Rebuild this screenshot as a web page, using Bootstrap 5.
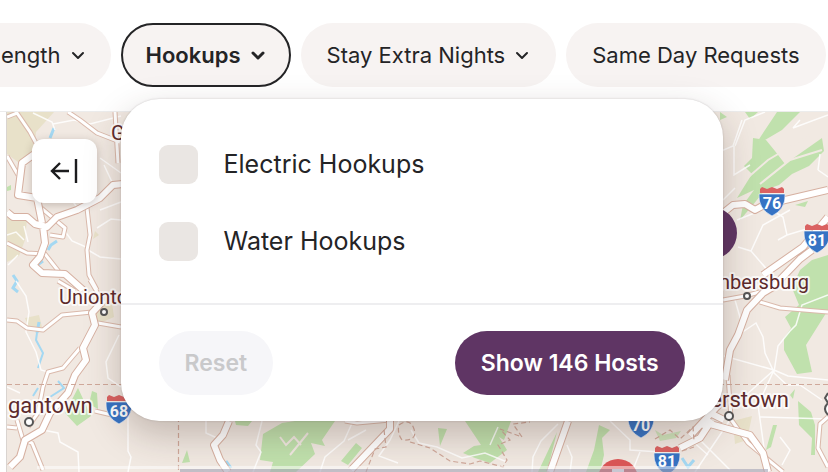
<!DOCTYPE html>
<html lang="en">
<head>
<meta charset="utf-8">
<meta name="viewport" content="width=device-width, initial-scale=1">
<title>Host map filters</title>
<link href="https://cdn.jsdelivr.net/npm/bootstrap@5.3.0/dist/css/bootstrap.min.css" rel="stylesheet">
<style>
  body { font-family: Inter, "Liberation Sans", sans-serif; color: #242426; background: #fff; }
  .filter-bar { padding: 23px 0 24px; border-bottom: 1px solid #ececec; gap: 10px; }
  .pill { height: 64px; padding: 0 26px; border: 0; border-radius: 32px; background: #f7f3f2; color: #242426; font-size: 22px; line-height: 28px; gap: 9px; white-space: nowrap; flex: none; }
  .pill.filter-first { padding-left: 1px; padding-right: 25px; border-radius: 0 32px 32px 0; }
  .pill.is-open { border: 2px solid #242426; padding: 0 23px; font-weight: 600; }
  .pill svg { width: 16px; height: 16px; }
  .filter-menu { top: calc(100% + 12px); left: 0; width: 602px; border-radius: 38px; background: #fff; box-shadow: 0 0 2px rgba(40,30,30,.22), 0 14px 36px rgba(60,40,30,.26); z-index: 5; }
  .menu-options { padding: 46px 38px 42px; gap: 38px; }
  .menu-options .option { gap: 26px; }
  .option label { font-size: 25px; line-height: 39px; }
  .option .form-check-input { width: 39px; height: 39px; margin: 0; border: 0; border-radius: 9px; background-color: #eae6e3; flex: none; }
  .menu-actions { padding: 26px 38px; border-top: 2px solid #eeeef0; }
  .menu-actions button { height: 64px; padding: 0 26px; border: 0; border-radius: 32px; font-size: 23px; line-height: 28px; font-weight: 600; }
  .btn-reset { background: #f6f6f9; color: #c9c9cb; }
  .btn-show { background: #5f3564; color: #fff; }
  .map-area { margin-left: 6px; border-left: 1px solid #d9d4d0; background: #f1e9e2; min-height: 0; }
  .collapse-btn { top: 27px; left: 25px; width: 65px; height: 64px; border: 0; border-radius: 12px; background: #fff; box-shadow: 0 2px 8px rgba(60,40,30,.25); }
  .place { font: 400 20px Roboto, sans-serif; fill: #5d2a2c; stroke: #fff; stroke-width: 4px; stroke-opacity: .8; paint-order: stroke; stroke-linejoin: round; }
  .place-lg { font-size: 22px; }
  .shield-no { font: 700 16px Roboto, sans-serif; fill: #fff; text-anchor: middle; }
</style>
<script src="https://cdn.jsdelivr.net/npm/bootstrap@5.3.0/dist/js/bootstrap.bundle.min.js"></script>
</head>
<body>
<div class="d-flex flex-column vh-100 overflow-hidden">
  <nav class="filter-bar d-flex flex-nowrap" aria-label="Filters">
    <button type="button" class="pill filter-first d-flex align-items-center">ength
      <svg viewBox="0 0 16 16" fill="none" stroke="currentColor" stroke-width="2" stroke-linecap="round" stroke-linejoin="round" aria-hidden="true"><path d="M3 6l5 5 5-5"/></svg></button>
    <div class="position-relative flex-shrink-0">
      <button type="button" class="pill is-open d-flex align-items-center" aria-expanded="true">Hookups
        <svg viewBox="0 0 16 16" fill="none" stroke="currentColor" stroke-width="3" stroke-linecap="round" stroke-linejoin="round" aria-hidden="true"><path d="M3 6l5 5 5-5"/></svg></button>
      <form class="filter-menu position-absolute">
        <div class="menu-options d-flex flex-column">
          <div class="option d-flex align-items-center"><input class="form-check-input" type="checkbox" id="electric"><label for="electric">Electric Hookups</label></div>
          <div class="option d-flex align-items-center"><input class="form-check-input" type="checkbox" id="water"><label for="water">Water Hookups</label></div>
        </div>
        <div class="menu-actions d-flex justify-content-between">
          <button type="reset" class="btn-reset" disabled>Reset</button>
          <button type="button" class="btn-show">Show 146 Hosts</button>
        </div>
      </form>
    </div>
    <button type="button" class="pill d-flex align-items-center">Stay Extra Nights
      <svg viewBox="0 0 16 16" fill="none" stroke="currentColor" stroke-width="2" stroke-linecap="round" stroke-linejoin="round" aria-hidden="true"><path d="M3 6l5 5 5-5"/></svg></button>
    <button type="button" class="pill d-flex align-items-center">Same Day Requests</button>
  </nav>

  <main class="map-area position-relative flex-grow-1 overflow-hidden">
    <svg class="d-block w-100 h-100" viewBox="7 112 821 360" preserveAspectRatio="xMinYMin slice" role="img" aria-label="Map of hosts">
      <defs>
        <g id="shield">
          <path d="M-13-7H13Q14 8 0 15Q-14 8-13-7Z" fill="#3673c4" stroke="#fff" stroke-opacity=".6" stroke-width="1"/>
          <path d="M-12-8V-12L-10-14-5-12 0-14 5-12 10-14 12-12V-8Z" fill="#da6262"/>
        </g>
        <!-- road network, drawn twice: casing and fill -->
        <g id="roads" fill="none" stroke-linejoin="round">
          <path d="M40 154L33 155 22 163 18 195 37 198 42 223M7 212L13 217H27L35 224 47 227 57 217 77 210 100 198 113 185 123 184M43 226L45 243 40 257 33 265 42 273 65 274 83 290M104 300L92 313 95 325 83 348 86 360 75 375 68 393 50 413 42 430 25 440 20 457 10 467M723 213L733 205 745 204 755 210 764 205 828 190M828 217L803 247 763 275M812 250L800 259 773 287 763 293 747 310 738 335 730 350 725 380M700 425L710 424 750 435 763 453 768 472M700 408L724 420M690 436L725 398M229 421L223 435 214 445 220 460 228 472M390 421V429L351 470M568 421L550 472M680 448L700 438 712 420"/>
        </g>
        <g id="lanes" fill="none" stroke-linejoin="round">
          <path d="M68 112L80 120 97 133 120 142M115 112L118 163M87 208L90 235 87 250 89 275 97 290M40 207L65 228 63 237 50 235M7 243L27 253 45 254 60 273M7 117L17 113 30 132 37 145M7 156L18 175M7 320L17 321 27 328 43 330 62 315 92 312M80 348L63 368 48 372 43 387 38 413 28 427M98 323L121 327M17 420L23 440 32 443 43 470M7 427L17 428M58 281L75 291M90 280L100 297M95 411L112 415M728 375L731 418M730 418L748 443 783 472M723 300L745 296 763 291M760 302L780 308 828 312M828 417L820 424 818 448 828 467M345 421L357 423 390 420"/>
        </g>
      </defs>
      <g fill="#e8e1c9">
        <path d="M7 112H54L36 132 34 155 18 162 7 154ZM7 218L27 219 25 240 19 256 7 262Z"/>
        <path d="M93 305L112 303 114 317 98 324ZM25 318L39 315 42 327 29 328ZM733 421L752 416 747 440 735 444ZM95 231L99 235 93 239Z"/>
      </g>
      <g fill="#c0e1ad">
        <path d="M745 112H758L750 119ZM800 112L782 130 760 143 752 150 765 130 777 112ZM720 112L727 117 720 120ZM753 138L766 140 775 151 785 164 822 138 824 151 809 166 792 174 779 185 765 190 752 206 740 220 743 205 754 190 737 198 752 174 744 166 752 158ZM795 205L808 201 805 207Z"/>
        <path d="M7 187L11 185V190L7 191ZM78 388L91 416 77 426 65 413ZM92 391L97 393 98 409 89 404Z"/>
        <path d="M800 270L812 260 828 255V310L806 345 812 372 797 374 784 350 784 338 791 328 785 317 799 305 792 288ZM798 401L811 412 815 425 815 455 811 455 812 438 799 425ZM790 395L795 389 793 399ZM773 425L777 425 771 447 766 450Z"/>
        <path d="M263 434L282 423 295 421H335L322 440 325 446 311 443 315 454 296 472H270L273 462 260 460ZM235 421H252L248 426 236 425ZM187 450L190 462 182 463ZM341 461L356 443 362 448 348 465ZM465 421H498L511 421 504 440 499 437 507 450 490 463 475 458 463 453 474 446 481 445ZM438 428L447 429 440 446ZM599 425L610 430 602 438 604 455 600 472H586L594 450ZM557 432L538 472H547Z"/>
        <path d="M655 430L663 435 681 431 676 438 660 441Z" opacity=".7"/>
      </g>
      <g fill="none" stroke="#f1e9e2" stroke-width="2">
        <path d="M280 437L286 445 294 437 301 445M290 455L308 433M745 180L768 160 810 135M760 184L790 160 822 150"/>
      </g>
      <g fill="none" stroke="#a4d8f2" stroke-width="3">
        <path d="M54 128L50 138M57 241L51 245 48 250M43 261L36 266M13 275L17 281 13 288 18 292M39 322L37 333M226 461L231 468M682 458L688 467 694 460"/>
        <path d="M37 333L36 340 43 353 38 368M38 388L33 396M50 397L64 388 58 381" stroke-width="2"/>
      </g>
      <!-- minor roads -->
      <g fill="none" stroke="#fff" stroke-width="1.5" stroke-opacity=".85">
        <path d="M33 113L52 122 55 130M53 124L74 120 90 124 121 116M100 210L121 202M7 235L16 232 24 240M24 226L28 242M88 250L100 257 121 259M97 228L111 219 121 220M64 230L72 241 86 247M72 200L76 206M18 255L8 265M16 281L26 296 29 312 26 332 36 352 41 370 48 372M119 335L106 362 108 378 121 387M7 387L20 393M43 430L58 433 60 442 78 452 79 472M128 400V451L131 457 128 472M104 165L112 182M100 158L121 173"/>
        <path d="M700 160L733 146 742 120M734 146V175L750 165M793 128L828 115M793 128L800 120M765 112L745 120 735 146M723 200L735 188M818 170L828 177M818 170L820 154M775 212L783 217 787 235 778 240M787 235L810 228M737 220L757 212M738 247L751 251 763 225 790 210M751 251L770 273M735 300L744 331 756 323 763 337 765 353 774 372 778 346 790 331 796 325 802 305 828 295M724 356L774 370 788 376 828 380M774 370L758 405 765 455M774 370L735 405M773 372L787 385 800 385 822 400M760 417L828 419M730 420L695 472M700 440L730 470M780 437L790 450 782 465"/>
        <path d="M206 421V433L217 438M262 421L256 445 261 452 253 472M353 421L344 441 325 457 320 472M399 421L390 440 379 456 398 463M411 430L419 443 437 447 462 458 485 453 507 462M490 445L498 427M558 424L541 441 533 457 532 472M567 445L572 457 570 472M610 421L630 440 630 450 660 452M690 439L708 455M640 452L632 472M366 430L348 440"/>
      </g>
      <use href="#lanes" stroke="#dab9ab" stroke-width="5"/>
      <use href="#lanes" stroke="#fff" stroke-width="3"/>
      <use href="#roads" stroke="#d6b0a1" stroke-width="8"/>
      <use href="#roads" stroke="#fff" stroke-width="6"/>
      <g fill="none" stroke="#cfa89a" stroke-width="1.2" stroke-dasharray="5 3">
        <path d="M7 384.500H828M178.500 385V472M366 472L375 449 386 447 384 430M399 425Q410 417 414 429T402 440Q397 433 399 425M410 442L430 448 450 461 470 464 480 461 503 467 507 460 498 445 510 440 500 429 522 437 513 424 530 422M655 439L670 430 680 439 693 427 694 441M682 451L694 447"/>
      </g>

      <circle cx="711" cy="233" r="26" fill="#5f3564"/>
      <circle cx="618" cy="479" r="20" fill="#db5757"/>
      <path d="M612 472V469H624V472Z" fill="#fff"/>

      <g fill="#fff" stroke="#555" stroke-width="2">
        <circle cx="104" cy="312" r="3"/><circle cx="29" cy="422" r="4"/><circle cx="747" cy="296" r="3"/><circle cx="729" cy="416" r="4"/>
        <path d="M828 393L825 398 828 403Q822 409 828 415"/>
      </g>
      <text class="place" x="111" y="140">Greensburg</text>
      <text class="place" x="59" y="304">Uniontown</text>
      <text class="place place-lg" x="8" y="413">gantown</text>
      <text class="place" text-anchor="end" x="809" y="289">Chambersburg</text>
      <text class="place place-lg" text-anchor="end" x="789" y="407">Hagerstown</text>

      <use href="#shield" x="772" y="201"/><text class="shield-no" x="772" y="209">76</text>
      <use href="#shield" x="817" y="238"/><text class="shield-no" x="817" y="246">81</text>
      <use href="#shield" x="119" y="409"/><text class="shield-no" x="119" y="417">68</text>
      <use href="#shield" x="641" y="423"/><text class="shield-no" x="641" y="431">70</text>
      <use href="#shield" x="667" y="460"/><text class="shield-no" x="667" y="467">81</text>

      <path d="M37 466H700V469H37Z" fill="#fff" opacity=".5"/>
      <path d="M180 469H768V472H180Z" fill="#a3a3b5" opacity=".6"/>
    </svg>
    <button type="button" class="collapse-btn position-absolute d-flex align-items-center justify-content-center p-0" aria-label="Collapse list">
      <svg width="30" height="30" viewBox="0 0 30 30" fill="none" stroke="#1c1c1e" stroke-width="2.400" aria-hidden="true"><path d="M19 15H2M10 7L2 15L10 23M26 3V27"/></svg>
    </button>
  </main>
</div>
</body>
</html>
